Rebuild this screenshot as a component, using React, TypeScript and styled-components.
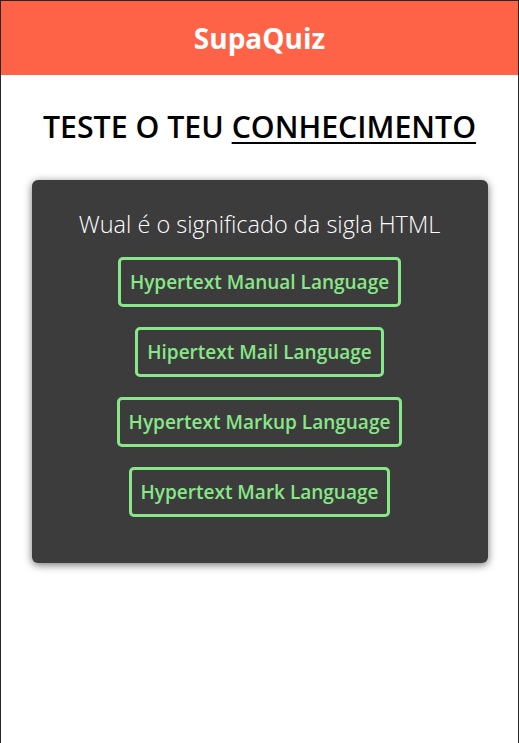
import React from 'react';
import styled, { createGlobalStyle } from 'styled-components';

const GlobalStyle = createGlobalStyle`
body {
  margin: 0;
  background: #ffffff;
  font-family: "Open Sans", "Noto Sans", sans-serif;
}
`

const Page = styled.div`
min-height: 100vh;
box-sizing: border-box;
border: 1px solid #262626;
border-bottom: none;
background: #ffffff;
`

const Header = styled.header`
height: 74px;
background: #ff6347;
display: flex;
justify-content: center;
align-items: center;
`

const Brand = styled.h1`
margin: 0;
color: #ffffff;
font-size: 28px;
font-weight: 700;
`

const Main = styled.main`
display: flex;
flex-direction: column;
align-items: center;
padding-top: 26px;
`

const Title = styled.h2`
margin: 0 0 27px;
font-size: 30.3px;
font-weight: 600;
color: #000000;
line-height: 52px;
span {
  text-decoration: underline;
  text-decoration-thickness: 2px;
  text-underline-offset: 4px;
}
`

const Card = styled.section`
width: 456px;
box-sizing: border-box;
background: #3c3c3c;
border-radius: 6px;
box-shadow: 0 2px 8px rgba(0, 0, 0, 0.55);
padding: 26px 20px 46px;
display: flex;
flex-direction: column;
align-items: center;
gap: 20px;
`

const Question = styled.p`
margin: 0 0 -5px;
color: #ffffff;
font-size: 23.5px;
font-weight: 300;
line-height: 36px;
`

const Answer = styled.button`
height: 50px;
box-sizing: border-box;
padding: 0 9px;
background: transparent;
border: 3px solid #88e788;
border-radius: 5px;
color: #88e788;
font-family: inherit;
font-size: 19px;
font-weight: 600;
cursor: pointer;
`

const answers = [
  'Hypertext Manual Language',
  'Hipertext Mail Language',
  'Hypertext Markup Language',
  'Hypertext Mark Language',
]

export default function App() {
  return (
    <Page>
      <GlobalStyle />
      <Header>
        <Brand>SupaQuiz</Brand>
      </Header>
      <Main>
        <Title>TESTE O TEU <span>CONHECIMENTO</span></Title>
        <Card>
          <Question>Wual é o significado da sigla HTML</Question>
          {answers.map((a) => (
            <Answer key={a}>{a}</Answer>
          ))}
        </Card>
      </Main>
    </Page>
  )
}
